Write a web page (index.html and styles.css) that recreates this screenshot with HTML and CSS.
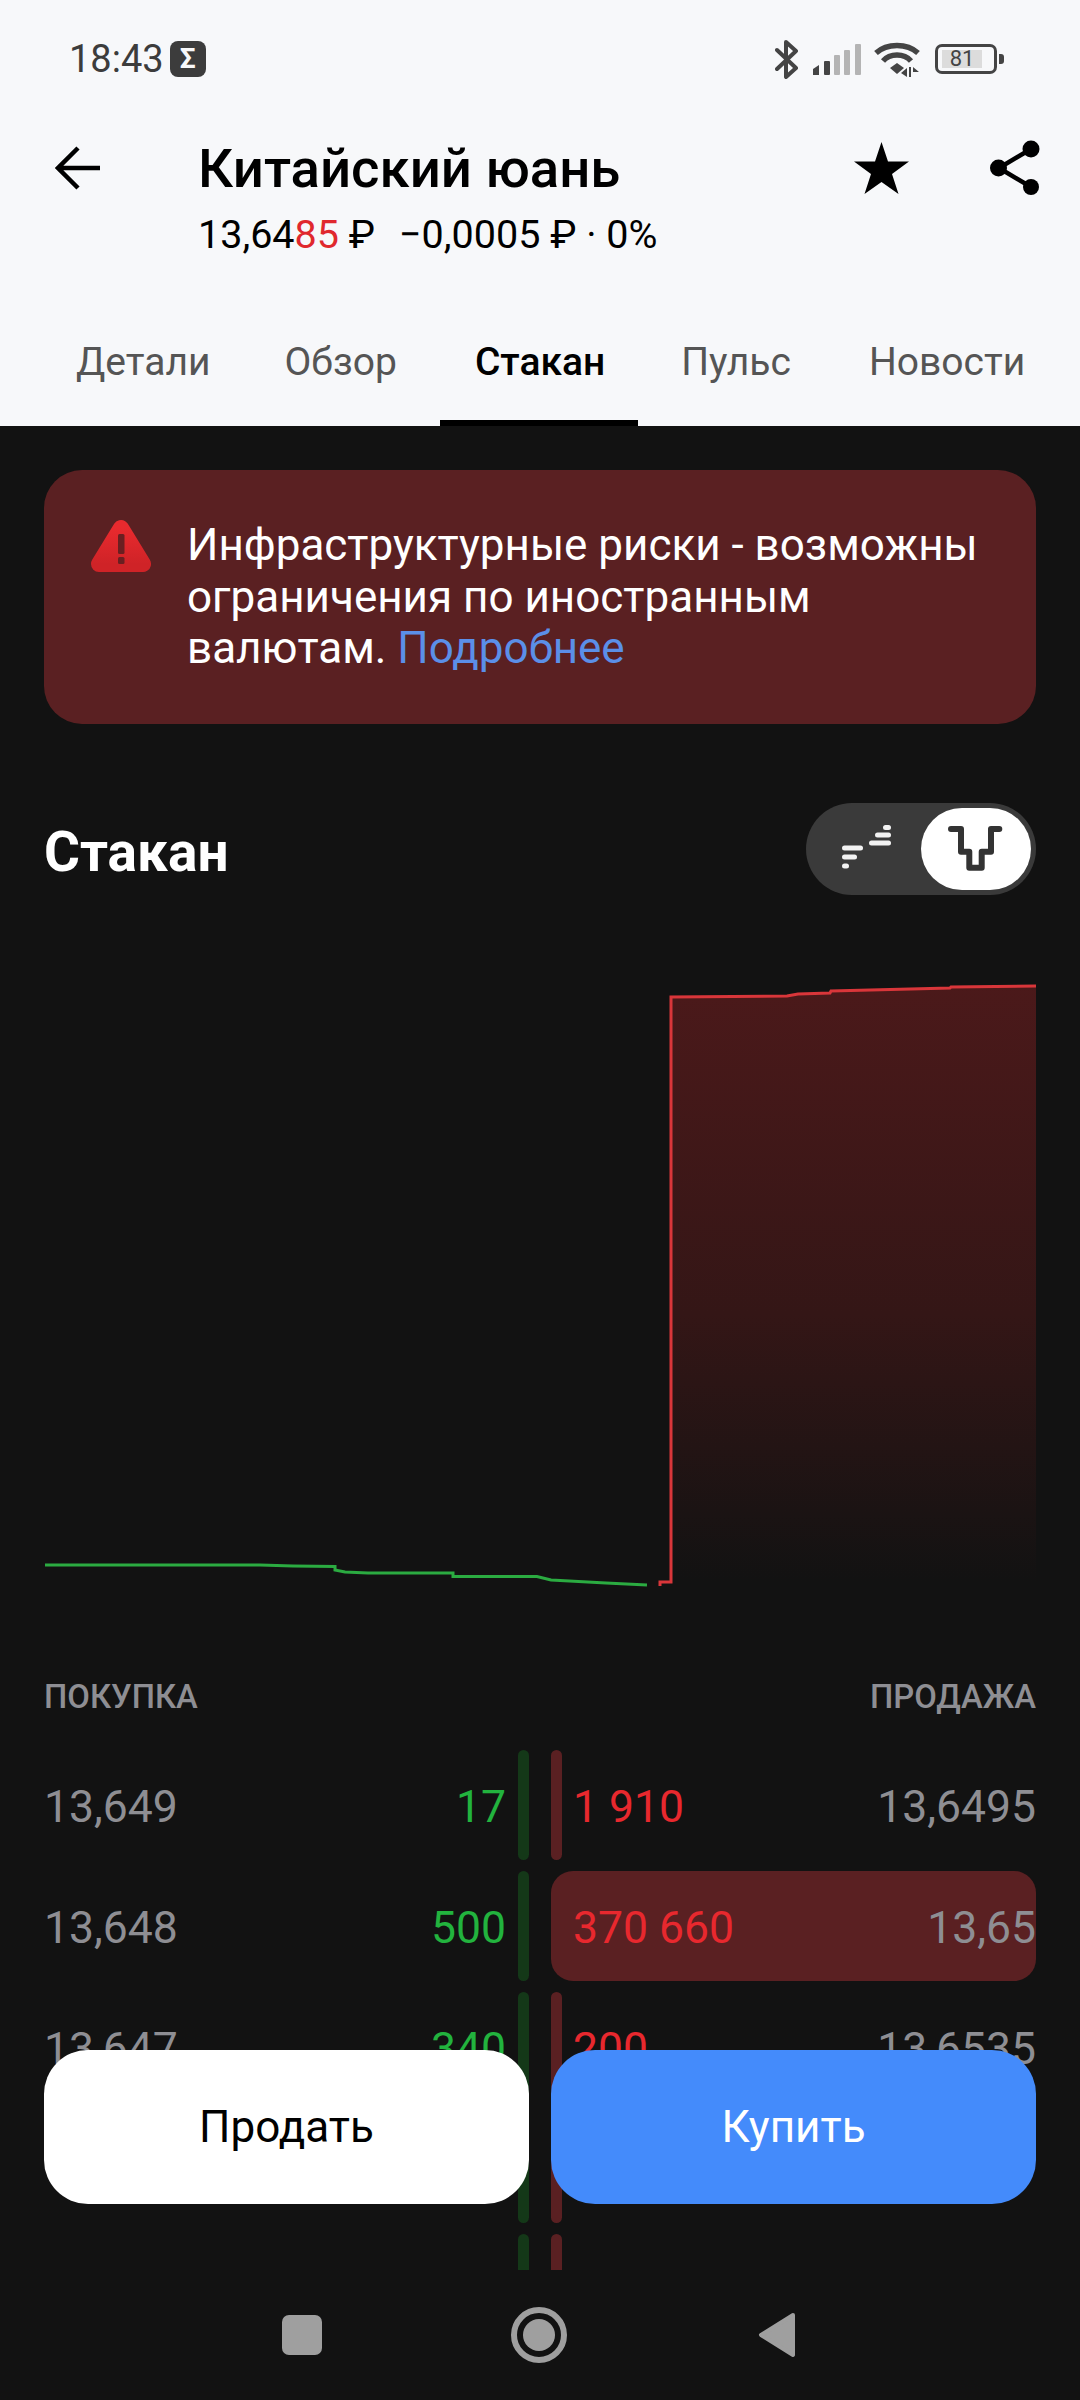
FILE: index.html
```html
<!DOCTYPE html>
<html lang="ru">
<head>
<meta charset="utf-8">
<title>Китайский юань</title>
<link rel="stylesheet" href="styles.css">
</head>
<body>
<div class="screen">
  <header class="top">
    <div class="status">
      <span class="clock">18:43</span>
      <span class="sigma">Σ</span>
      <div class="status-icons">
        <svg class="ic-bt" viewBox="0 0 25 39" width="25" height="39"><path d="M2 10 L21 28 L11 37 V2 L21 11 L2 29" fill="none" stroke="#444" stroke-width="4" stroke-linejoin="round" stroke-linecap="round"/></svg>
        <svg class="ic-signal" viewBox="0 0 48 31" width="48" height="31">
          <path d="M0 25 L6 21 V31 H0Z" fill="#444"/>
          <rect x="11" y="17" width="6" height="14" rx="1" fill="#444"/>
          <rect x="21" y="11" width="6" height="20" rx="1" fill="#b4b4b4"/>
          <rect x="31" y="6" width="6" height="25" rx="1" fill="#b4b4b4"/>
          <rect x="42" y="0" width="6" height="31" rx="1" fill="#b4b4b4"/>
        </svg>
        <svg class="ic-wifi" viewBox="0 0 46 35" width="46" height="35">
          <path d="M2 11 C13 1 33 1 44 11" fill="none" stroke="#444" stroke-width="5.500"/>
          <path d="M9 19 C16 11 30 11 37 19" fill="none" stroke="#444" stroke-width="5.500"/>
          <path d="M16 26 L23 21 L30 26 L23 32Z" fill="#444"/>
          <path d="M33 26 V35 L27 31Z M37 25 V35 H35 V25Z M39 25 L45 30 H39Z" fill="#444"/>
        </svg>
        <div class="battery">
          <div class="battery-body"><span class="battery-level">81</span></div>
          <span class="battery-nub"></span>
        </div>
      </div>
    </div>
    <div class="toolbar">
      <svg class="ic-back" viewBox="0 0 46 44" width="46" height="44"><path d="M45 22 H3 M23 2 L3 22 L23 42" fill="none" stroke="#000" stroke-width="4.500"/></svg>
      <div class="titles">
        <h1 class="title">Китайский юань</h1>
        <p class="subtitle"><span>13,64<em class="down">85</em> ₽</span><span class="change">−0,0005 ₽ · 0%</span></p>
      </div>
      <svg class="ic-star" viewBox="0 0 55 52" width="55" height="52"><path d="M27.500 0 L34 19.500 H55 L38 32 L44.500 52 L27.500 40 L10.500 52 L17 32 L0 19.500 H21Z" fill="#000"/></svg>
      <svg class="ic-share" viewBox="0 0 50 56" width="50" height="56">
        <path d="M41 9 L9 28 L41 47" fill="none" stroke="#000" stroke-width="4.500"/>
        <circle cx="41" cy="9" r="8.500"/><circle cx="8.500" cy="28" r="8.500"/><circle cx="41" cy="47" r="8"/>
      </svg>
    </div>
    <nav class="tabs">
      <span class="tab">Детали</span>
      <span class="tab tab-2">Обзор</span>
      <span class="tab tab-3 tab-active">Стакан</span>
      <span class="tab tab-4">Пульс</span>
      <span class="tab tab-5">Новости</span>
    </nav>
  </header>

  <main class="content">
    <section class="banner">
      <svg class="ic-warn" viewBox="0 0 60 54" width="60" height="54">
        <defs>
          <linearGradient id="warnFill" x1="0" y1="0" x2="0" y2="1">
            <stop offset="0" stop-color="#e82a2e"/>
            <stop offset="1" stop-color="#cf2327"/>
          </linearGradient>
        </defs>
        <path d="M30 9 L52 45 H8Z" fill="url(#warnFill)" stroke="url(#warnFill)" stroke-width="16" stroke-linejoin="round"/>
        <rect x="27" y="15" width="6.500" height="20" rx="1.500" fill="#6a1f21"/>
        <rect x="27" y="38" width="6.500" height="7" rx="1.500" fill="#6a1f21"/>
      </svg>
      <p class="banner-text">Инфраструктурные риски - возможны ограничения по иностранным валютам. <a class="link">Подробнее</a></p>
    </section>

    <div class="section-head">
      <h2 class="section-title">Стакан</h2>
      <div class="toggle">
        <svg class="ic-ladder" viewBox="0 0 50 48" width="50" height="48">
          <g stroke="#f2f2f2" stroke-width="5" stroke-linecap="round">
            <path d="M2.500 23 H18.500"/><path d="M2.500 32 H12.500"/><path d="M2.500 41 H4.500"/>
            <path d="M29.500 18 H46.500"/><path d="M35.500 10 H46.500"/><path d="M43.500 2.500 H46.500"/>
          </g>
        </svg>
        <span class="knob">
          <svg class="ic-depth" viewBox="0 0 56 46" width="56" height="46"><path d="M3 3 H13 V25.700 H21.300 V41.700 H33.700 V25.700 H43 V3 H51.300" fill="none" stroke="#333" stroke-width="6" stroke-linecap="round" stroke-linejoin="round"/></svg>
        </span>
      </div>
    </div>

    <svg class="chart" viewBox="0 0 1080 624" width="1080" height="624">
      <defs>
        <linearGradient id="askFill" x1="0" y1="0" x2="0" y2="1">
          <stop offset="0" stop-color="#4b191a"/>
          <stop offset="0.55" stop-color="#341616"/>
          <stop offset="1" stop-color="#121212"/>
        </linearGradient>
      </defs>
      <path d="M671 600 V16 L787 15 L798 13 L830 12 L831 10 L950 7 L951 6 L1036 5 V600 H671Z" fill="url(#askFill)"/>
      <path d="M660 605 V601 H671 V16 L787 15 L798 13 L830 12 L831 10 L950 7 L951 6 L1036 5" fill="none" stroke="#d9363a" stroke-width="3"/>
      <path d="M45 584 H260 L293 585 L335 585.500 V589 L345 591 L368 592 H453 V595.500 H537 L551 599 L606 602 L647 604" fill="none" stroke="#2bab41" stroke-width="3"/>
    </svg>

    <div class="book-head"><span>ПОКУПКА</span><span>ПРОДАЖА</span></div>

    <div class="book">
      <div class="row">
        <div class="side side-buy"><span class="price">13,649</span><span class="qty qty-buy">17</span><i class="depth depth-buy"></i></div>
        <div class="side side-sell"><i class="depth depth-sell"></i><span class="qty qty-sell">1 910</span><span class="price">13,6495</span></div>
      </div>
      <div class="row">
        <div class="side side-buy"><span class="price">13,648</span><span class="qty qty-buy">500</span><i class="depth depth-buy"></i></div>
        <div class="side side-sell"><i class="depth depth-sell depth-full"></i><span class="qty qty-sell">370 660</span><span class="price">13,65</span></div>
      </div>
      <div class="row">
        <div class="side side-buy"><span class="price">13,647</span><span class="qty qty-buy">340</span><i class="depth depth-buy"></i></div>
        <div class="side side-sell"><i class="depth depth-sell"></i><span class="qty qty-sell">200</span><span class="price">13,6535</span></div>
      </div>
      <div class="row">
        <div class="side side-buy"><i class="depth depth-buy"></i></div>
        <div class="side side-sell"><i class="depth depth-sell"></i></div>
      </div>
      <div class="row">
        <div class="side side-buy"><i class="depth depth-buy"></i></div>
        <div class="side side-sell"><i class="depth depth-sell"></i></div>
      </div>
    </div>

    <div class="actions">
      <button class="btn btn-sell">Продать</button>
      <button class="btn btn-buy">Купить</button>
    </div>
  </main>

  <footer class="navbar">
    <span class="nav-square"></span>
    <span class="nav-home"></span>
    <svg class="nav-back" viewBox="0 0 38 46" width="38" height="46"><path d="M35 3 L3 23 L35 43Z" fill="#9f9f9f" stroke="#9f9f9f" stroke-width="4" stroke-linejoin="round"/></svg>
  </footer>
</div>
</body>
</html>
```

FILE: styles.css
```css
* { box-sizing: border-box; }
html, body { margin: 0; padding: 0; background: #121212; }
body { font-family: Roboto, "Noto Sans", sans-serif; }
.screen { width: 1080px; height: 2400px; display: flex; flex-direction: column; overflow: hidden; }

.top { background: #f7f8fa; height: 426px; flex: none; }
.status { height: 118px; display: flex; align-items: center; padding: 0 76px 0 69px; color: #3c3c3c; }
.clock { font-size: 38px; line-height: 1; }
.sigma { width: 36px; height: 36px; margin-left: 6px; background: #3c3c3c; color: #f7f8fa; border-radius: 8px; font-size: 28px; font-weight: 700; line-height: 36px; text-align: center; }
.status-icons { margin-left: auto; display: flex; align-items: center; }
.ic-signal { margin-left: 13px; }
.ic-wifi { margin-left: 13px; }
.battery { margin-left: 15px; display: flex; align-items: center; }
.battery-body { width: 62px; height: 30px; border: 3.5px solid #444; border-radius: 7px; padding: 3px 12px 3px 4px; }
.battery-level { display: block; height: 100%; background: #dcdcdc; font-size: 22px; line-height: 17px; text-align: center; color: #444; }
.battery-nub { width: 5px; height: 10px; margin-left: 2px; background: #444; border-radius: 0 3px 3px 0; }

.toolbar { height: 142px; display: flex; align-items: flex-start; padding-left: 55px; color: #000; }
.ic-back { margin-top: 28px; flex: none; }
.titles { margin-left: 97px; width: 656px; }
.title { margin: 18px 0 0; font-size: 54.500px; line-height: 64px; font-weight: 500; white-space: nowrap; }
.subtitle { margin: 10px 0 0; font-size: 39.500px; line-height: 50px; display: flex; gap: 24px; }
.down { font-style: normal; color: #e0282e; }
.ic-star { margin-top: 24px; flex: none; }
.ic-share { margin-top: 22px; margin-left: 81px; flex: none; }

.tabs { height: 166px; display: flex; align-items: flex-end; padding-left: 76px; }
.tab { font-size: 39px; line-height: 50px; color: #555; padding-bottom: 39px; }
.tab-2 { margin-left: 74px; }
.tab-3 { margin-left: 78px; }
.tab-4 { margin-left: 76px; }
.tab-5 { margin-left: 78px; }
.tab-active { color: #000; font-weight: 500; position: relative; }
.tab-active::after { content: ""; position: absolute; left: -35px; right: -33px; bottom: 0; height: 6px; background: #000; }

.content { flex: 1; position: relative; overflow: hidden; }
.banner { margin: 44px 44px 0; height: 254px; padding: 52px 24px 0 47px; background: #5a2022; border-radius: 38px; display: flex; gap: 36px; align-items: flex-start; }
.ic-warn { flex: none; margin-top: -3px; }
.banner-text { margin: -2px 0 0; font-size: 44px; line-height: 51.500px; color: #fff; }
.link { color: #5b8fe8; }

.section-head { margin: 79px 44px 0; height: 92px; display: flex; align-items: center; justify-content: space-between; }
.section-title { margin: 5px 0 0; font-size: 55px; font-weight: 700; color: #fff; line-height: 60px; }
.toggle { width: 230px; height: 92px; border-radius: 46px; background: #3a3a3a; display: flex; align-items: center; padding-right: 5px; justify-content: flex-end; gap: 29px; }
.knob { width: 110px; height: 82px; border-radius: 41px; background: #fff; display: flex; align-items: center; justify-content: center; }

.chart { display: block; margin-top: 86px; }
.book-head { margin: 72px 44px 0; height: 40px; display: flex; justify-content: space-between; color: #8e8e93; font-size: 32.800px; line-height: 40px; font-weight: 500; }

.book { margin: 33px 44px 0; height: 520px; overflow: hidden; display: flex; flex-direction: column; gap: 11px; }
.row { height: 110px; flex: none; display: flex; gap: 22px; }
.side { width: 485px; flex: none; position: relative; display: flex; align-items: center; padding-top: 3px; font-size: 44.500px; color: #8e8e93; }
.side-sell { padding-left: 22px; }
.side-buy { padding-right: 23px; }
.qty-buy { margin-left: auto; color: #22b33e; }
.qty-sell { color: #e8282e; position: relative; }
.side-sell .price { margin-left: auto; position: relative; }
.depth { position: absolute; top: 0; bottom: 0; width: 11px; border-radius: 6px; }
.depth-buy { right: 0; background: #143818; }
.depth-sell { left: 0; background: #5a2022; }
.depth-full { width: 100%; border-radius: 22px; }

.actions { position: absolute; left: 44px; right: 44px; top: 1624px; display: flex; gap: 22px; }
.btn { flex: 1; height: 154px; border: 0; border-radius: 44px; font-family: inherit; font-size: 44px; }
.btn-sell { background: #fff; color: #000; }
.btn-buy { background: #448bfb; color: #fff; }

.navbar { height: 130px; flex: none; background: #121212; display: flex; align-items: center; padding: 0 0 0 282px; }
.nav-square { width: 40px; height: 40px; border-radius: 7px; background: #9f9f9f; }
.nav-home { width: 56px; height: 56px; border-radius: 50%; border: 6px solid #9f9f9f; margin-left: 189px; position: relative; }
.nav-home::after { content: ""; position: absolute; inset: 6px; border-radius: 50%; background: #9f9f9f; }
.nav-back { margin-left: 191px; }
```
